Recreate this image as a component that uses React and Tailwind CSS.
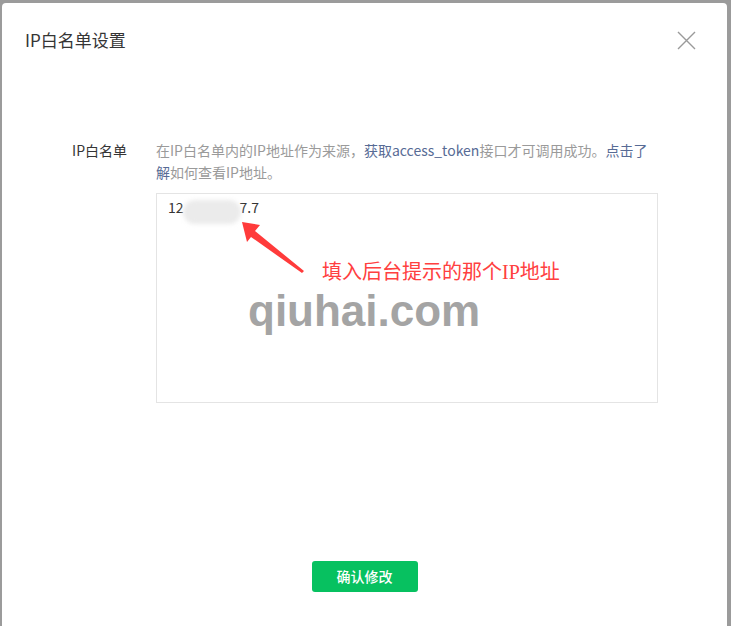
export default function App() {
  const cjk = { fontFamily: '"Noto Sans CJK SC", "Noto Sans", sans-serif' };

  return (
    <div className="w-[731px] h-[626px] bg-[#9b9b9b] pl-[2px] pr-[4px] pt-[3px] overflow-hidden" style={cjk}>
      <div className="h-full bg-white rounded-t-[4px] flex flex-col">
        {/* Header */}
        <div className="flex items-center justify-between pl-[23px] pr-[31px] pt-[22px] h-[52px]">
          <h2 className="text-[17px] leading-[26px] text-[#353535]">IP白名单设置</h2>
          <button className="w-[20px] h-[20px] flex items-center justify-center">
            <svg width="19" height="19" viewBox="0 0 19 19" fill="none" stroke="#9a9a9a" strokeWidth="1.4">
              <path d="M1 1 L18 18 M18 1 L1 18" />
            </svg>
          </button>
        </div>

        {/* Form row */}
        <div className="flex mt-[84px]">
          <div className="w-[125px] text-right text-[14px] leading-[22px] text-[#353535]">IP白名单</div>
          <div className="ml-[29px] w-[504px]">
            <p className="text-[14px] leading-[22px] text-[#9a9a9a]">
              在IP白名单内的IP地址作为来源，<span className="text-[#576b95]">获取access_token</span>接口才可调用成功。<span className="text-[#576b95]">点击了解</span>如何查看IP地址。
            </p>
            <div className="relative mt-[10px] w-[502px] h-[210px] border border-[#e4e4e4]">
              <div className="relative flex pl-[11px] pt-[2px] text-[14px] leading-[22px] text-[#353535]">
                <span>12</span>
                <span className="w-[56px]" />
                <span>7.7</span>
                {/* redacted part */}
                <span className="absolute left-[26px] top-[6px] w-[58px] h-[24px] rounded-full bg-[#ebebeb] blur-[2px]" />
              </div>

              {/* annotation arrow */}
              <svg className="absolute left-[84px] top-[26px]" width="66" height="54" viewBox="0 0 66 54">
                <polygon points="1,2 19,5 14,11 63,51 61,53 10,17 6,22" fill="#ff3b3b" />
              </svg>

              <div
                className="absolute left-[165px] top-[65px] text-[20px] leading-[26px] text-[#ff4040]"
                style={{ fontFamily: '"Liberation Serif", "Noto Sans CJK SC", serif' }}
              >
                填入后台提示的那个IP地址
              </div>

              <div
                className="absolute left-[91px] top-[92px] text-[44px] leading-[50px] font-bold text-[#a4a4a4]"
                style={{ fontFamily: '"Liberation Sans", sans-serif' }}
              >
                qiuhai.com
              </div>
            </div>
          </div>
        </div>

        {/* Footer */}
        <div className="flex justify-center mt-[158px]">
          <button className="w-[106px] h-[31px] rounded-[3px] bg-[#07c160] text-white text-[14px] font-medium">
            确认修改
          </button>
        </div>
      </div>
    </div>
  );
}
